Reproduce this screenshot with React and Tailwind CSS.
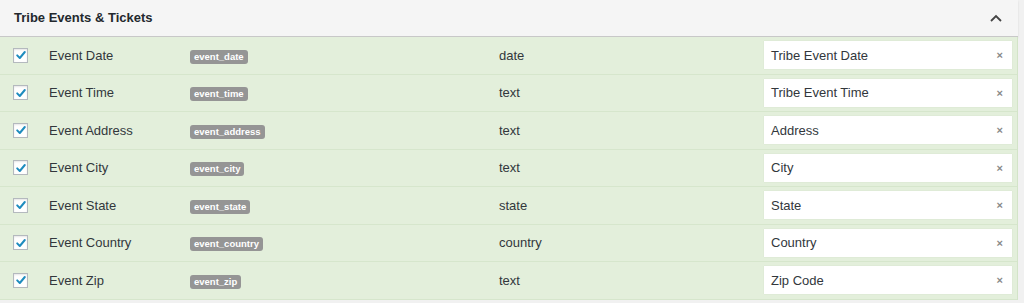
import React from "react";

const FIELDS = [
  { label: "Event Date", key: "event_date", type: "date", value: "Tribe Event Date" },
  { label: "Event Time", key: "event_time", type: "text", value: "Tribe Event Time" },
  { label: "Event Address", key: "event_address", type: "text", value: "Address" },
  { label: "Event City", key: "event_city", type: "text", value: "City" },
  { label: "Event State", key: "event_state", type: "state", value: "State" },
  { label: "Event Country", key: "event_country", type: "country", value: "Country" },
  { label: "Event Zip", key: "event_zip", type: "text", value: "Zip Code" },
];

const Checkbox = () => (
  <span className="w-[15px] h-[15px] bg-white border border-[#b4b9be] shadow-[inset_0_1px_2px_rgba(0,0,0,0.1)] flex items-center justify-center">
    <svg width="12" height="12" viewBox="0 0 12 12">
      <path d="M2.2 6.4 L4.8 9 L9.8 3" fill="none" stroke="#1e8cbe" strokeWidth="2" strokeLinecap="round" strokeLinejoin="round" />
    </svg>
  </span>
);

const App = () => {
  return (
    <div className="w-[1024px] h-[303px] bg-[#f1f1f1] overflow-hidden" style={{ fontFamily: '"Liberation Sans", Arial, sans-serif' }}>
      <div className="w-[1018px]">
        {/* HEADER */}
        <div className="h-[37px] bg-[#f5f5f5] border-b border-[#c8c8c8] shadow-[0_1px_2px_rgba(0,0,0,0.1)] flex items-center justify-between pl-[14px] pr-[15px]">
          <span className="text-[13px] font-bold text-[#23282d]">Tribe Events &amp; Tickets</span>
          <svg width="14" height="10" viewBox="0 0 14 10">
            <path d="M2 8 L7 3 L12 8" fill="none" stroke="#444" strokeWidth="1.8" />
          </svg>
        </div>

        {/* ROWS */}
        <div className="bg-[#e3efdb] border-r border-[#d3e4c8]">
          {FIELDS.map((f) => (
            <div key={f.key} className="h-[37.5px] flex items-center border-b border-[#d6e6cc] text-[13px] text-[#32373c]">
              <div className="w-[49px] pl-[13px] flex items-center">
                <Checkbox />
              </div>
              <div className="w-[141px]">{f.label}</div>
              <div className="w-[309px]">
                <span className="inline-block bg-[#959595] text-white text-[9.5px] font-bold leading-[14px] px-[4px] rounded-[3px]">
                  {f.key}
                </span>
              </div>
              <div className="w-[265px]">{f.type}</div>
              <div className="w-[248px] h-[28px] bg-white flex items-center justify-between pl-[7px] pr-[9px] shadow-[0_0_1px_rgba(0,0,0,0.1)]">
                <span>{f.value}</span>
                <span className="text-[11px] text-[#888] font-bold">×</span>
              </div>
            </div>
          ))}
        </div>
      </div>
    </div>
  );
};

export default App;
